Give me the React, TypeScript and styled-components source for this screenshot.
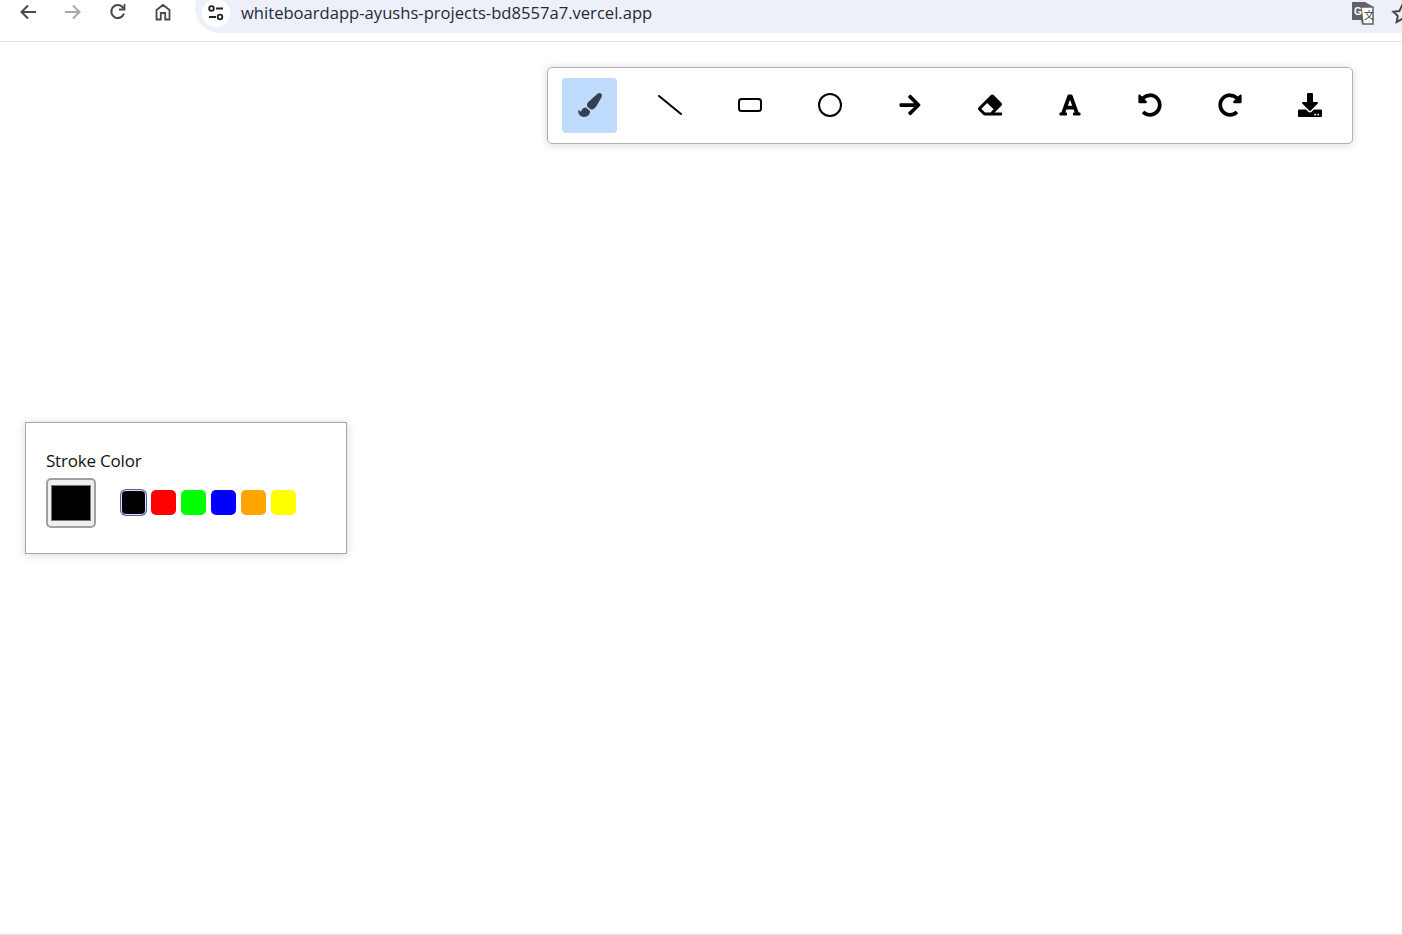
import styled, { createGlobalStyle } from "styled-components";
import {
  FaPaintBrush,
  FaArrowRight,
  FaEraser,
  FaFont,
  FaUndoAlt,
  FaRedoAlt,
  FaDownload,
} from "react-icons/fa";

const GlobalStyle = createGlobalStyle`
  html, body {
    margin: 0;
    height: 100%;
    background: #fff;
    overflow: hidden;
    font-family: "Open Sans", "Noto Sans", sans-serif;
  }
  #root {
    height: 100%;
  }
`;

const Page = styled.div`
  display: flex;
  flex-direction: column;
  height: 935px;
  overflow: hidden;
`;

const BrowserBar = styled.header`
  flex: 0 0 42px;
  box-sizing: border-box;
  display: flex;
  align-items: flex-start;
  border-bottom: 1px solid #e2e3e5;
  overflow: hidden;
`;

const NavIcon = styled.span<{ $off?: boolean }>`
  flex: 0 0 45px;
  height: 24px;
  display: flex;
  align-items: center;
  justify-content: center;
  color: ${({ $off }) => ($off ? "#a8a9ab" : "#47494c")};
`;

const NavGroup = styled.nav`
  display: flex;
  padding-left: 5px;
  flex: 0 0 195px;
  box-sizing: border-box;
`;

const Omnibox = styled.div`
  flex: 1 0 auto;
  height: 50px;
  margin-top: -17px;
  margin-right: -27px;
  border-radius: 25px;
  background: #edf0f8;
  display: flex;
  align-items: flex-end;
  padding: 0 0 3px 7px;
  box-sizing: border-box;
`;

const SiteChip = styled.span`
  width: 28px;
  height: 28px;
  border-radius: 50%;
  background: #fff;
  display: flex;
  align-items: center;
  justify-content: center;
  color: #1f2328;
  margin-right: 11px;
  margin-bottom: 3px;
`;

const UrlText = styled.span`
  flex: 1;
  font-size: 16.6px;
  line-height: 24px;
  color: #1f2a3a;
  white-space: nowrap;
  margin-bottom: 5px;
`;

const OmniIcon = styled.span`
  display: flex;
  margin-right: 16px;
  margin-bottom: 5px;
`;

const Board = styled.main`
  flex: 1;
  position: relative;
  background: #fff;
  border-bottom: 2px solid #f0f0f0;
`;

const Toolbar = styled.div`
  position: absolute;
  top: 25px;
  left: 547px;
  width: 806px;
  box-sizing: border-box;
  display: flex;
  gap: 25px;
  padding: 10px 15px 10px 14px;
  background: #fff;
  border: 1px solid #aeb0b7;
  border-radius: 5px;
  box-shadow: 0 1px 8px rgba(0, 0, 0, 0.16);
`;

const ToolButton = styled.button<{ $active?: boolean }>`
  width: 55px;
  height: 55px;
  padding: 0 0 1px;
  border: 0;
  border-radius: 4px;
  display: flex;
  align-items: center;
  justify-content: center;
  background: ${({ $active }) => ($active ? "#bfdbfe" : "transparent")};
  color: ${({ $active }) => ($active ? "#374151" : "#000")};
`;

const ColorPanel = styled.section`
  position: absolute;
  top: 380px;
  left: 25px;
  width: 322px;
  height: 132px;
  box-sizing: border-box;
  padding: 26px 20px 0;
  background: #fff;
  border: 1px solid #a3a7b4;
  box-shadow: 0 1px 9px rgba(0, 0, 0, 0.16);
`;

const PanelLabel = styled.div`
  font-size: 17px;
  line-height: 24px;
  color: #111;
  height: 29px;
  letter-spacing: -0.2px;
`;

const ColorRow = styled.div`
  display: flex;
  align-items: flex-start;
  gap: 25px;
`;

const ColorInput = styled.input`
  width: 50px;
  height: 50px;
  margin: 0;
  padding: 1px;
  box-sizing: border-box;
  border: 2px solid #a0a0a0;
  border-radius: 5px;
  background: #efefef;
  display: block;
`;

const Swatches = styled.div`
  display: flex;
  gap: 5px;
  margin-top: 12px;
`;

const Swatch = styled.span<{ $color: string; $selected?: boolean }>`
  width: 25px;
  height: 25px;
  border-radius: 5px;
  background: ${({ $color }) => $color};
  ${({ $selected }) =>
    $selected ? "box-shadow: 0 0 0 1px #dfe0f0 inset, 0 0 0 1px #5a5ab0;" : ""}
`;

const COLORS = ["#000000", "#ff0000", "#00ff00", "#0000ff", "#ffa500", "#ffff00"];

const BackIcon = () => (
  <svg width="20" height="20" viewBox="0 0 20 20" fill="none" stroke="currentColor" strokeWidth="2">
    <path d="M18 10H4M10 3.500 3.500 10l6.500 6.500" />
  </svg>
);

const ForwardIcon = () => (
  <svg width="20" height="20" viewBox="0 0 20 20" fill="none" stroke="currentColor" strokeWidth="2">
    <path d="M2 10h14M10 3.500 16.500 10 10 16.500" />
  </svg>
);

const ReloadIcon = () => (
  <svg width="20" height="20" viewBox="0 0 20 20" fill="none" stroke="currentColor" strokeWidth="2">
    <path d="M16 11.500A6.500 6.500 0 1 1 14.500 5L16 6.500" />
    <path d="M16.500 2v5.500H11" strokeWidth="1.800" />
  </svg>
);

const HomeIcon = () => (
  <svg width="20" height="20" viewBox="0 0 20 20" fill="none" stroke="currentColor" strokeWidth="1.800">
    <path d="M3.500 17.500V8L10 3l6.500 5v9.500h-4.300V11H7.800v6.500z" />
  </svg>
);

const TuneIcon = () => (
  <svg width="18" height="18" viewBox="0 0 18 18" fill="none" stroke="currentColor" strokeWidth="1.800">
    <circle cx="4.500" cy="4.500" r="2.300" />
    <path d="M9 4.500h7M2 13h7" />
    <circle cx="13" cy="13" r="2.300" />
  </svg>
);

const TranslateIcon = () => (
  <svg width="24" height="24" viewBox="0 0 24 24">
    <path d="M1 1h13l7 4v18H11l-1-4H1z" fill="#5f6368" />
    <path d="M10 6h12v17H12z" fill="#fff" stroke="#5f6368" strokeWidth="1.500" />
    <text x="3" y="14" fontSize="10" fontWeight="700" fill="#fff" fontFamily="Liberation Sans, sans-serif">G</text>
    <text x="13" y="18" fontSize="10" fill="#3c4043" fontFamily="Noto Sans CJK SC, sans-serif">文</text>
  </svg>
);

const StarIcon = () => (
  <svg width="22" height="22" viewBox="0 0 22 22" fill="none" stroke="#47494c" strokeWidth="2">
    <path d="M11 2.500l2.600 5.600 6 .7-4.400 4.200 1.200 6L11 16l-5.400 3 1.200-6-4.400-4.200 6-.7z" />
  </svg>
);

const LineIcon = () => (
  <svg width="24" height="24" viewBox="0 0 24 24" fill="none" stroke="#000" strokeWidth="2" strokeLinecap="round">
    <path d="M1 3l22 18" />
  </svg>
);

const RectIcon = () => (
  <svg width="24" height="24" viewBox="0 0 24 24" fill="none" stroke="#000" strokeWidth="2">
    <rect x="1" y="6" width="22" height="12" rx="2.500" />
  </svg>
);

const CircleIcon = () => (
  <svg width="24" height="24" viewBox="0 0 24 24" fill="none" stroke="#000" strokeWidth="2">
    <circle cx="12" cy="12" r="11" />
  </svg>
);

export default function App() {
  return (
    <Page>
      <GlobalStyle />
      <BrowserBar>
        <NavGroup>
          <NavIcon><BackIcon /></NavIcon>
          <NavIcon $off><ForwardIcon /></NavIcon>
          <NavIcon><ReloadIcon /></NavIcon>
          <NavIcon><HomeIcon /></NavIcon>
        </NavGroup>
        <Omnibox>
          <SiteChip><TuneIcon /></SiteChip>
          <UrlText>whiteboardapp-ayushs-projects-bd8557a7.vercel.app</UrlText>
          <OmniIcon><TranslateIcon /></OmniIcon>
          <OmniIcon><StarIcon /></OmniIcon>
        </Omnibox>
      </BrowserBar>
      <Board>
        <Toolbar>
          <ToolButton $active><FaPaintBrush size={24} /></ToolButton>
          <ToolButton><LineIcon /></ToolButton>
          <ToolButton><RectIcon /></ToolButton>
          <ToolButton><CircleIcon /></ToolButton>
          <ToolButton><FaArrowRight size={24} /></ToolButton>
          <ToolButton><FaEraser size={24} /></ToolButton>
          <ToolButton><FaFont size={24} /></ToolButton>
          <ToolButton><FaUndoAlt size={24} /></ToolButton>
          <ToolButton><FaRedoAlt size={24} /></ToolButton>
          <ToolButton><FaDownload size={24} /></ToolButton>
        </Toolbar>
        <ColorPanel>
          <PanelLabel>Stroke Color</PanelLabel>
          <ColorRow>
            <ColorInput type="color" defaultValue="#000000" />
            <Swatches>
              {COLORS.map((c, i) => (
                <Swatch key={c} $color={c} $selected={i === 0} />
              ))}
            </Swatches>
          </ColorRow>
        </ColorPanel>
      </Board>
    </Page>
  );
}
